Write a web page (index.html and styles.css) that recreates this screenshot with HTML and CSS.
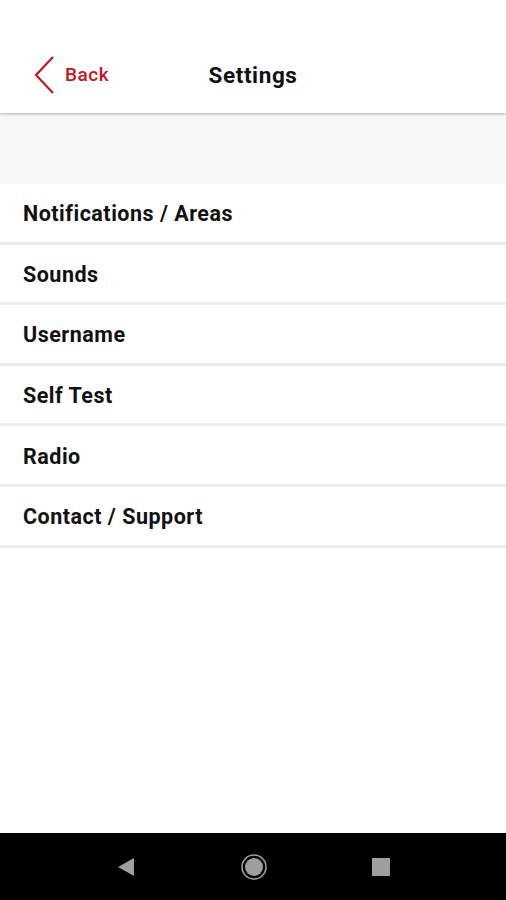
FILE: index.html
```html
<!DOCTYPE html>
<html lang="en">
<head>
    <meta charset="UTF-8">
    <meta name="viewport" content="width=device-width, initial-scale=1.0">
    <title>Settings</title>
    <link rel="stylesheet" href="styles.css">
</head>
<body>
    <div class="screen">
        <header class="topbar">
            <a class="back" href="#">
                <svg class="back-icon" width="22" height="40" viewBox="0 0 22 40">
                    <polyline points="20,2 3,20 20,38" fill="none" stroke="#c4161c" stroke-width="2.2"/>
                </svg>
                <span>Back</span>
            </a>
            <h1>Settings</h1>
        </header>
        <div class="spacer"></div>
        <ul class="menu">
            <li>Notifications / Areas</li>
            <li>Sounds</li>
            <li>Username</li>
            <li>Self Test</li>
            <li>Radio</li>
            <li>Contact / Support</li>
        </ul>
        <div class="fill"></div>
        <nav class="navbar">
            <svg width="18" height="20" viewBox="0 0 18 20"><polygon points="17,1 17,19 1,10" fill="#9e9e9e"/></svg>
            <svg width="28" height="28" viewBox="0 0 28 28"><circle cx="14" cy="14" r="12" fill="none" stroke="#9e9e9e" stroke-width="1.6"/><circle cx="14" cy="14" r="9" fill="#9e9e9e"/></svg>
            <svg width="18" height="18" viewBox="0 0 18 18"><rect x="0" y="0" width="18" height="18" fill="#9e9e9e"/></svg>
        </nav>
    </div>
</body>
</html>
```

FILE: styles.css
```css
* {
    margin: 0;
    padding: 0;
    box-sizing: border-box;
    font-family: Roboto, 'Noto Sans', sans-serif;
}

body {
    background: #fff;
}

.screen {
    display: flex;
    flex-direction: column;
    height: 900px;
}

.topbar {
    position: relative;
    height: 113px;
    display: flex;
    align-items: center;
    padding-top: 36px;
    background: #fff;
    box-shadow: 0 1px 3px rgba(0, 0, 0, 0.3);
    z-index: 1;
}

.back {
    display: flex;
    align-items: center;
    gap: 10px;
    padding-left: 33px;
    color: #c4161c;
    font-size: 19px;
    font-weight: 500;
    letter-spacing: 0.5px;
    text-decoration: none;
}

.topbar h1 {
    position: absolute;
    left: 0;
    right: 0;
    top: 36px;
    bottom: 0;
    display: flex;
    align-items: center;
    justify-content: center;
    font-size: 22.5px;
    font-weight: 700;
    letter-spacing: 0.6px;
    color: #111;
    pointer-events: none;
}

.spacer {
    height: 71px;
    background: #f8f8f8;
}

.menu {
    list-style: none;
}

.menu li {
    height: 60.6px;
    display: flex;
    align-items: center;
    padding: 2px 0 0 23px;
    font-size: 21.5px;
    font-weight: 700;
    letter-spacing: 0.5px;
    color: #111;
    border-bottom: 3px solid #ececec;
}

.fill {
    flex: 1;
}

.navbar {
    height: 67px;
    background: #000;
    display: flex;
    align-items: center;
    justify-content: space-between;
    padding: 0 116px 0 117px;
}
```
